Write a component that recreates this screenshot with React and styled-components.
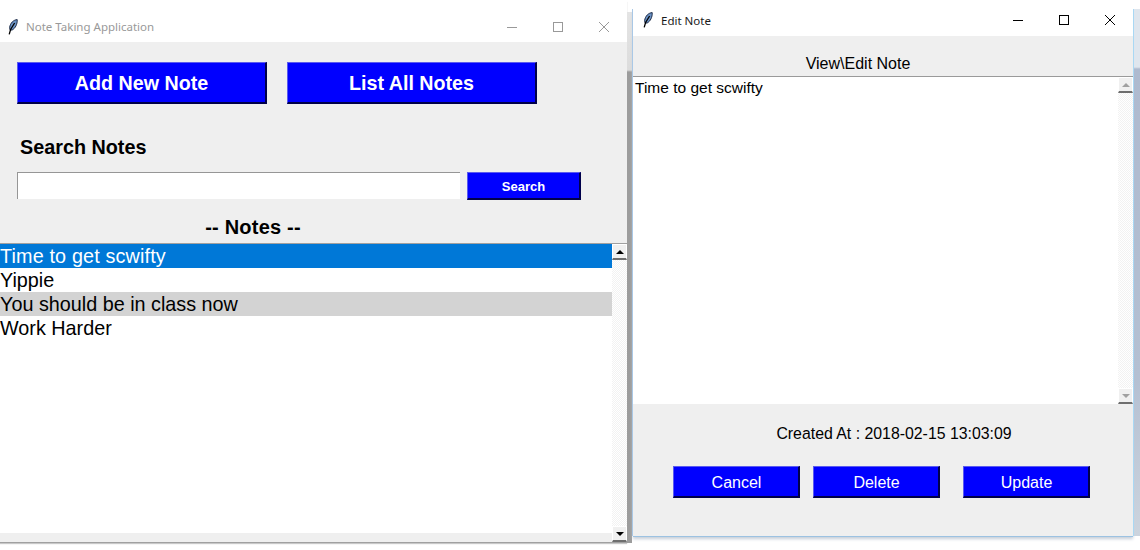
import React from "react";
import styled, { createGlobalStyle } from "styled-components";

const Global = createGlobalStyle`
  html, body { margin: 0; padding: 0; background: #fff; }
  body { font-family: "Liberation Sans", Arial, sans-serif; }
`;

const Desktop = styled.div`
  position: relative;
  width: 1140px;
  height: 550px;
  overflow: hidden;
  background: #fff;
`;

const Window = styled.section`
  position: absolute;
  left: ${(p) => p.$x}px;
  top: ${(p) => p.$y}px;
  width: ${(p) => p.$w}px;
  height: ${(p) => p.$h}px;
  display: flex;
  flex-direction: column;
  background: #efefef;
`;

const LeftWindow = styled(Window)`
  box-shadow: 0 1px 0 #a0a0a0, 0 2px 1px #c8c8c8;
  &::after {
    content: "";
    position: absolute;
    top: 12px;
    bottom: -1px;
    right: -5px;
    width: 5px;
    background: linear-gradient(#e4e4e4 0, #dcdcdc 58px, #9c9c9c 60px);
  }
`;

const RightWindow = styled(Window)`
  box-shadow: -1px 0 0 #a9c8e6, 1px 0 0 #a9d8f4, 0 1px 0 #9cc2e2, 0 3px 3px #c6ced8;
  &::after {
    content: "";
    position: absolute;
    top: 0;
    bottom: 0;
    right: -7px;
    width: 6px;
    background: linear-gradient(#dfe6ee 0, #dfe6ee 58px, #aebacf 60px, #b4c0d2 70%, #ccd4de 100%);
  }
`;

const TitleBar = styled.header`
  box-sizing: border-box;
  flex: none;
  height: ${(p) => p.$h}px;
  background: #fff;
  display: flex;
  align-items: center;
  padding: ${(p) => p.$padTop}px 0 ${(p) => p.$padBottom}px ${(p) => p.$pad}px;
  font-family: "Noto Sans", "Open Sans", sans-serif;
  font-size: 11.5px;
  color: ${(p) => (p.$active ? "#1a1a1a" : "#999")};
`;

const Feather = styled.svg`
  width: 10px;
  height: 16px;
  flex: none;
  margin-right: 8px;
`;

const TitleText = styled.span`
  flex: 1;
  white-space: nowrap;
`;

const Controls = styled.div`
  display: flex;
  align-items: center;
`;

const Control = styled.svg`
  width: 46px;
  height: 12px;
  display: block;
  stroke: ${(p) => (p.$active ? "#000" : "#999")};
  fill: none;
  stroke-width: 1;
`;

const TitleIcon = () => (
  <Feather viewBox="0 0 10 16">
    <path d="M9.2 .6C5.6 .8 2.2 4 1.6 8.6l.5 2.6 2.2-.3C7.2 9.4 9.6 5 9.2 .6z" fill="#6b92c4" stroke="#0e1c38" strokeWidth=".9" />
    <path d="M6.6 4 2.6 10.5 1.2 15.4" stroke="#000" strokeWidth="1.3" fill="none" />
  </Feather>
);

const WinControls = ({ active }) => (
  <Controls>
    <Control $active={active} viewBox="0 0 46 12">
      <path d="M18 6.5h10" />
    </Control>
    <Control $active={active} viewBox="0 0 46 12">
      <rect x="18.5" y="1.5" width="9" height="9" />
    </Control>
    <Control $active={active} viewBox="0 0 46 12">
      <path d="M18 1l10 10M28 1L18 11" />
    </Control>
  </Controls>
);

const Body = styled.div`
  flex: 1;
  min-height: 0;
  display: flex;
  flex-direction: column;
`;

const BlueButton = styled.button`
  box-sizing: border-box;
  width: ${(p) => p.$w}px;
  height: ${(p) => p.$h}px;
  padding: 2px 0 0;
  background: #0000ff;
  color: #fff;
  font-family: "Liberation Sans", Arial, sans-serif;
  font-size: ${(p) => p.$size}px;
  font-weight: ${(p) => (p.$bold ? 700 : 400)};
  border: 1px solid;
  border-color: #5a5af0 #00004a #00004a #5a5af0;
  border-bottom-width: 2px;
  border-right-width: 2px;
`;

const ActionButton = styled(BlueButton)`
  padding-left: 1px;
`;

const TopActions = styled.div`
  display: flex;
  gap: 20px;
  padding: 20px 0 0 17px;
`;

const SearchHeading = styled.h2`
  margin: 0;
  padding: 31px 0 0 20px;
  font-size: 19.8px;
  line-height: 24px;
  font-weight: 700;
  color: #000;
`;

const SearchRow = styled.div`
  display: flex;
  align-items: flex-start;
  gap: 7px;
  padding: 13px 0 0 17px;
`;

const SearchInput = styled.input`
  box-sizing: border-box;
  width: 443px;
  height: 27px;
  background: #fff;
  border: 0;
  border-top: 1px solid #969696;
  border-left: 1px solid #969696;
  outline: 0;
  padding: 0;
`;

const NotesHeading = styled.h3`
  margin: 0;
  width: 506px;
  padding-top: 15px;
  text-align: center;
  font-size: 20px;
  letter-spacing: 0.2px;
  line-height: 24px;
  font-weight: 700;
  color: #000;
`;

const ListArea = styled.div`
  margin-top: 4px;
  display: flex;
  border-top: 1px solid #a0a0a0;
`;

const ListColumn = styled.div`
  width: 612px;
  height: 298px;
  display: flex;
  flex-direction: column;
  background: #fff;
`;

const List = styled.ul`
  list-style: none;
  margin: 0;
  padding: 0;
  flex: 1;
`;

const Item = styled.li`
  height: 24px;
  line-height: 24px;
  font-size: 19.8px;
  white-space: nowrap;
  letter-spacing: ${(p) => (p.$tone === "active" ? "0.15px" : "0")};
  color: ${(p) => (p.$tone === "active" ? "#fff" : "#000")};
  background: ${(p) =>
    p.$tone === "active" ? "#0078d7" : p.$tone === "striped" ? "#d3d3d3" : "transparent"};
`;

const Track = styled.div`
  width: 15px;
  flex: none;
  display: flex;
  flex-direction: column;
  background: repeating-conic-gradient(#f2f2f2 0 25%, #fff 0 50%) 0 0 / 2px 2px;
`;

const TrackFill = styled.div`
  flex: 1;
`;

const Arrow = styled.div`
  flex: none;
  box-sizing: border-box;
  height: 16px;
  background: #f0f0f0;
  border: 1px solid #fff;
  border-bottom: 2px solid #6e6e6e;
  display: flex;
  align-items: center;
  justify-content: center;
  &::after {
    content: "";
    border-left: 4px solid transparent;
    border-right: 4px solid transparent;
    ${(p) => (p.$down ? "border-top" : "border-bottom")}: 4px solid ${(p) => (p.$muted ? "#a0a0a0" : "#000")};
  }
`;

const BottomStrip = styled.div`
  height: 9px;
  background: #efefef;
`;

const EditCaption = styled.div`
  height: 40px;
  box-sizing: border-box;
  padding-top: 18px;
  text-align: center;
  font-size: 16px;
  line-height: 20px;
  color: #000;
  width: 450px;
`;

const EditorArea = styled.div`
  height: 327px;
  display: flex;
  border-top: 1px solid #9a9a9a;
  background: #fff;
`;

const Editor = styled.div`
  flex: 1;
  padding: 0 0 0 2px;
  font-size: 15.5px;
  line-height: 21px;
  color: #000;
`;

const CreatedAt = styled.div`
  margin-top: 19px;
  text-align: center;
  width: 522px;
  font-size: 15.85px;
  line-height: 22px;
  white-space: nowrap;
  color: #000;
`;

const EditActions = styled.div`
  display: flex;
  padding: 21px 0 0 40px;
`;

const ActionSlot = styled.div`
  margin-right: ${(p) => p.$gap}px;
`;

export default function App() {
  return (
    <Desktop>
      <Global />
      <LeftWindow $x={0} $y={0} $w={627} $h={542}>
        <TitleBar $h={42} $pad={8} $padTop={11} $padBottom={0}>
          <TitleIcon />
          <TitleText>Note Taking Application</TitleText>
          <WinControls />
        </TitleBar>
        <Body>
          <TopActions>
            <BlueButton $w={250} $h={42} $size={19.7} $bold>Add New Note</BlueButton>
            <BlueButton $w={250} $h={42} $size={19.7} $bold>List All Notes</BlueButton>
          </TopActions>
          <SearchHeading>Search Notes</SearchHeading>
          <SearchRow>
            <SearchInput />
            <BlueButton $w={114} $h={28} $size={13} $bold>Search</BlueButton>
          </SearchRow>
          <NotesHeading>-- Notes --</NotesHeading>
          <ListArea>
            <ListColumn>
              <List>
                <Item $tone="active">Time to get scwifty</Item>
                <Item>Yippie</Item>
                <Item $tone="striped">You should be in class now</Item>
                <Item>Work Harder</Item>
              </List>
              <BottomStrip />
            </ListColumn>
            <Track>
              <Arrow />
              <TrackFill />
              <Arrow $down />
            </Track>
          </ListArea>
        </Body>
      </LeftWindow>

      <RightWindow $x={633} $y={9} $w={500} $h={527}>
        <TitleBar $h={27} $pad={10} $padTop={0} $padBottom={5} $active>
          <TitleIcon />
          <TitleText>Edit Note</TitleText>
          <WinControls active />
        </TitleBar>
        <Body>
          <EditCaption>View\Edit Note</EditCaption>
          <EditorArea>
            <Editor>Time to get scwifty</Editor>
            <Track>
              <Arrow $muted />
              <TrackFill />
              <Arrow $down $muted />
            </Track>
          </EditorArea>
          <CreatedAt>Created At : 2018-02-15 13:03:09</CreatedAt>
          <EditActions>
            <ActionSlot $gap={13}><ActionButton $w={127} $h={32} $size={16}>Cancel</ActionButton></ActionSlot>
            <ActionSlot $gap={23}><ActionButton $w={127} $h={32} $size={16}>Delete</ActionButton></ActionSlot>
            <ActionSlot $gap={0}><ActionButton $w={127} $h={32} $size={16}>Update</ActionButton></ActionSlot>
          </EditActions>
        </Body>
      </RightWindow>
    </Desktop>
  );
}
